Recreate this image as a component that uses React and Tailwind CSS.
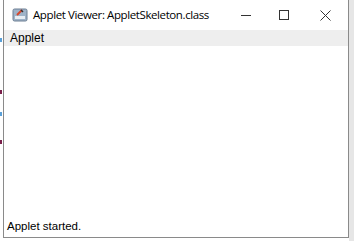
import React from 'react';

const font = { fontFamily: '"Liberation Sans", Arial, sans-serif' };

const AppIcon = () => (
  <svg width="16" height="16" viewBox="0 0 16 16">
    <rect x="1" y="2" width="14" height="12" rx="1.5" fill="#9fb3c8" stroke="#6d7f93" />
    <rect x="3" y="9" width="10" height="3" fill="#e8eef4" />
    <path d="M5 8 L10 3" stroke="#d9472b" strokeWidth="2" />
    <path d="M9 3 L11 5" stroke="#333" strokeWidth="1.5" />
  </svg>
);

const AppletViewer = () => (
  <div className="flex h-[238px] w-[346px] flex-col border-x border-b border-[#8a8a8a] bg-white" style={font}>
    {/* title bar */}
    <div className="flex h-[30px] items-center bg-white">
      <div className="ml-[8px] flex w-[16px] items-center">
        <AppIcon />
      </div>
      <span className="ml-[5px] whitespace-nowrap text-[11.5px] tracking-[-0.4px] text-black" style={{ fontFamily: '"Open Sans", "Noto Sans", sans-serif' }}>
        Applet Viewer: AppletSkeleton.class
      </span>
      <div className="ml-auto flex h-full items-center">
        <div className="flex h-full w-[40px] items-center justify-center">
          <div className="h-px w-[10px] bg-[#333]" />
        </div>
        <div className="flex h-full w-[36px] items-center justify-center">
          <div className="h-[10px] w-[10px] border border-[#333]" />
        </div>
        <div className="flex h-full w-[46px] items-center justify-center">
          <svg width="11" height="11" viewBox="0 0 11 11">
            <path d="M0.5 0.5 L10.5 10.5 M10.5 0.5 L0.5 10.5" stroke="#333" strokeWidth="1" />
          </svg>
        </div>
      </div>
    </div>
    {/* menu bar */}
    <div className="flex h-[16px] items-center bg-[#eeeeee] pl-[6px] text-[12px] text-black">Applet</div>
    {/* applet area */}
    <div className="flex-1 bg-white" />
    {/* status */}
    <div className="h-[19px] whitespace-nowrap pl-[3px] text-[11.5px] leading-[16px] text-black">Applet started.</div>
  </div>
);

export default function App() {
  return (
    <div className="flex h-[241px] w-[354px] bg-white">
      <div className="relative w-[3px] bg-white">
        <div className="absolute left-0 top-[38px] h-[4px] w-[2px] bg-[#5aa0d8]" />
        <div className="absolute left-0 top-[90px] h-[4px] w-[2px] bg-[#7a1f4a]" />
        <div className="absolute left-0 top-[112px] h-[4px] w-[2px] bg-[#5aa0d8]" />
        <div className="absolute left-0 top-[140px] h-[4px] w-[2px] bg-[#7a1f4a]" />
      </div>
      <AppletViewer />
      <div className="flex-1 bg-[#e6e6e6]" />
    </div>
  );
}
